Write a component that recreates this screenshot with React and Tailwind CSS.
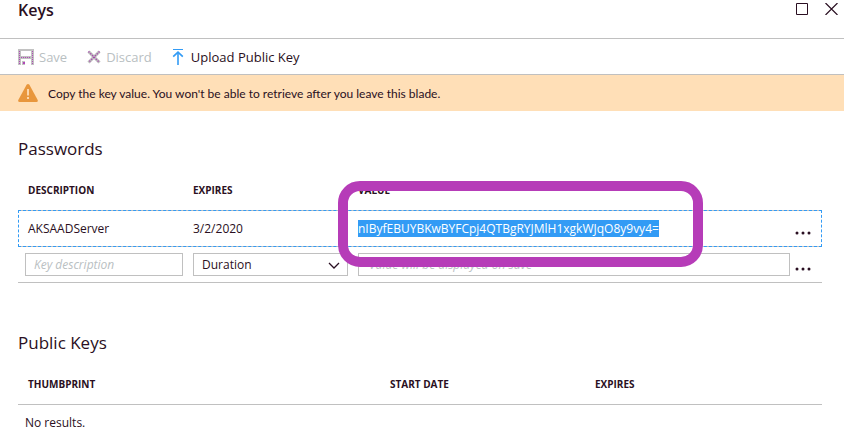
function SaveIcon() {
  return (
    <svg width="16" height="16" viewBox="0 0 16 16" aria-hidden="true" shapeRendering="crispEdges">
      <path d="M0 0h16v2H0zM0 0h3v16H0zM13 0h3v16h-3zM0 7h16v3H0zM4 12h3v4H4z" fill="#c2c2c2" />
      <path d="M1 2h1v1H1zM1 4h1v1H1zM1 6h1v1H1zM1 8h1v1H1zM1 10h1v1H1zM1 12h1v1H1zM1 14h1v1H1zM14 2h1v1h-1zM14 4h1v1h-1zM14 6h1v1h-1zM14 8h1v1h-1zM14 10h1v1h-1zM14 12h1v1h-1zM14 14h1v1h-1zM3 8h1v1H3zM5 8h1v1H5zM7 8h1v1H7zM9 8h1v1H9zM11 8h1v1h-1zM5 13h2v2H5z" fill="#b146b8" />
    </svg>
  );
}

function DiscardIcon() {
  return (
    <svg width="14" height="14" viewBox="0 0 14 14" aria-hidden="true" fill="none">
      <path d="M1.5 1.5l11 11M12.5 1.5l-11 11" stroke="#bcbcbc" strokeWidth="3" />
      <path d="M1.5 1.5l11 11M12.5 1.5l-11 11" stroke="#a83fb0" strokeWidth="1.3" strokeDasharray="1.2 1.4" />
    </svg>
  );
}

function UploadIcon() {
  return (
    <svg width="12" height="16" viewBox="0 0 12 16" aria-hidden="true" fill="none" stroke="#329bf5">
      <path d="M1 .5h10" />
      <path d="M6 3v13" strokeWidth="1.6" />
      <path d="M1.2 7.6L6 3.2l4.8 4.4" strokeWidth="1.7" />
    </svg>
  );
}

function WarningIcon() {
  return (
    <svg width="20" height="18" viewBox="0 0 20 18" aria-hidden="true">
      <path d="M8.6.8Q10-.6 11.4.8L19.7 16Q20.2 18 18.5 18H1.5Q-.2 18 .3 16z" fill="#e8963c" />
      <path d="M9.2 5h1.6v6.5H9.2zM9.2 13h1.6v2H9.2z" fill="#ffe6c8" />
    </svg>
  );
}

function MoreButton({ label }) {
  return (
    <button type="button" aria-label={label} className="flex h-5 w-[26px] items-center justify-center">
      <svg width="16" height="4" viewBox="0 0 16 4" aria-hidden="true" fill="#2a0f22">
        <circle cx="2" cy="2" r="1.5" />
        <circle cx="8" cy="2" r="1.5" />
        <circle cx="14" cy="2" r="1.5" />
      </svg>
    </button>
  );
}

function Heading({ children }) {
  return <h2 className="text-[17px] leading-6">{children}</h2>;
}

function HeaderCell({ children }) {
  return <th scope="col" className="h-10 pl-[10px] pt-[2px] text-left text-[10px] font-bold">{children}</th>;
}

export default function App() {
  return (
    <main className="overflow-hidden bg-white font-['Open_Sans','Noto_Sans',sans-serif] text-xs text-[#2a0f22]">
      <header className="flex h-[38px] justify-between pl-[18px] pr-[6px]">
        <h1 className="text-base font-semibold leading-5">Keys</h1>
        <div className="flex h-[18px] items-center gap-[17px]">
          <button type="button" aria-label="Maximize">
            <svg width="12" height="12" viewBox="0 0 12 12" aria-hidden="true" fill="none" stroke="#2a0f22">
              <path d="M.5.5h11v11H.5z" />
            </svg>
          </button>
          <button type="button" aria-label="Close">
            <svg width="13" height="12" viewBox="0 0 13 12" aria-hidden="true" fill="none" stroke="#2a0f22" strokeWidth="1.2">
              <path d="M.5 0l12 12M12.5 0L.5 12" />
            </svg>
          </button>
        </div>
      </header>

      <nav aria-label="Commands" className="flex h-[37px] items-center gap-5 border-y border-[#c0c0c0] px-[18px] pt-[2px] text-[13px]">
        <button type="button" disabled className="flex items-center gap-[5px] text-[#b9c0c2]">
          <SaveIcon />
          Save
        </button>
        <button type="button" disabled className="flex items-center gap-[5px] text-[#b9c0c2]">
          <DiscardIcon />
          Discard
        </button>
        <button type="button" className="flex items-center gap-[7px]">
          <UploadIcon />
          Upload Public Key
        </button>
      </nav>

      <div role="alert" className="flex h-9 items-center gap-[10px] bg-[#ffdfb7] px-[18px] font-['Lato','Open_Sans',sans-serif]">
        <WarningIcon />
        <p className="pt-[2px]">Copy the key value. You won't be able to retrieve after you leave this blade.</p>
      </div>

      <section className="pl-[18px] pr-[22px] pt-[26px]">
        <Heading>Passwords</Heading>
        <div className="relative pt-[9px]">
          <table className="w-full table-fixed border-separate border-spacing-0">
            <colgroup>
              <col className="w-[165px]" />
              <col className="w-[165px]" />
              <col />
              <col className="w-8" />
            </colgroup>
            <thead>
              <tr>
                <HeaderCell>DESCRIPTION</HeaderCell>
                <HeaderCell>EXPIRES</HeaderCell>
                <HeaderCell>VALUE</HeaderCell>
                <td />
              </tr>
            </thead>
            <tbody>
              <tr className="outline-1 -outline-offset-1 outline-dashed outline-[#329bf5]">
                <td className="h-[37px] border-y border-[#c0c0c0] pl-[10px]">AKSAADServer</td>
                <td className="border-y border-[#c0c0c0] pl-[10px]">3/2/2020</td>
                <td className="border-y border-[#c0c0c0] pl-[10px]">
                  <span className="bg-[#329bf5] text-white">nIByfEBUYBKwBYFCpj4QTBgRYJMlH1xgkWJqO8y9vy4=</span>
                </td>
                <td className="border-y border-[#c0c0c0] pt-2">
                  <MoreButton label="More options for AKSAADServer" />
                </td>
              </tr>
              <tr>
                <td className="h-9 border-b border-[#c0c0c0] pl-[7px]">
                  <input
                    type="text"
                    aria-label="Key description"
                    placeholder="Key description"
                    className="block h-[23px] w-full border border-[#c0c0c0] px-2 placeholder:italic placeholder:text-[#b9c0c2]"
                  />
                </td>
                <td className="border-b border-[#c0c0c0] pl-[10px]">
                  <div className="relative">
                    <select aria-label="Duration" className="block h-[23px] w-full appearance-none border border-[#c0c0c0] bg-white px-2">
                      <option>Duration</option>
                    </select>
                    <svg width="12" height="7" viewBox="0 0 12 7" aria-hidden="true" fill="none" stroke="#2a0f22" strokeWidth="1.3" className="pointer-events-none absolute right-2 top-[9px]">
                      <path d="M1 1l5 5 5-5" />
                    </svg>
                  </div>
                </td>
                <td className="border-b border-[#c0c0c0] pl-[10px]">
                  <input
                    type="text"
                    aria-label="Value"
                    placeholder="Value will be displayed on save"
                    className="block h-[23px] w-full border border-[#c0c0c0] px-[10px] placeholder:italic placeholder:text-[#b9c0c2]"
                  />
                </td>
                <td className="border-b border-[#c0c0c0] pt-2">
                  <MoreButton label="More options for new key" />
                </td>
              </tr>
            </tbody>
          </table>
          <div aria-hidden="true" className="pointer-events-none absolute left-[320px] top-5 h-[86px] w-[365px] rounded-[22px] border-10 border-[#b63cb8]" />
        </div>
      </section>

      <section className="pl-[18px] pr-[22px] pt-12">
        <Heading>Public Keys</Heading>
        <table className="mt-[9px] w-full table-fixed border-separate border-spacing-0">
          <colgroup>
            <col className="w-[362px]" />
            <col className="w-[205px]" />
            <col />
          </colgroup>
          <thead>
            <tr>
              <HeaderCell>THUMBPRINT</HeaderCell>
              <HeaderCell>START DATE</HeaderCell>
              <HeaderCell>EXPIRES</HeaderCell>
            </tr>
          </thead>
          <tbody>
            <tr>
              <td colSpan={3} className="h-9 border-t border-[#c0c0c0] pl-[7px]">No results.</td>
            </tr>
          </tbody>
        </table>
      </section>
    </main>
  );
}
